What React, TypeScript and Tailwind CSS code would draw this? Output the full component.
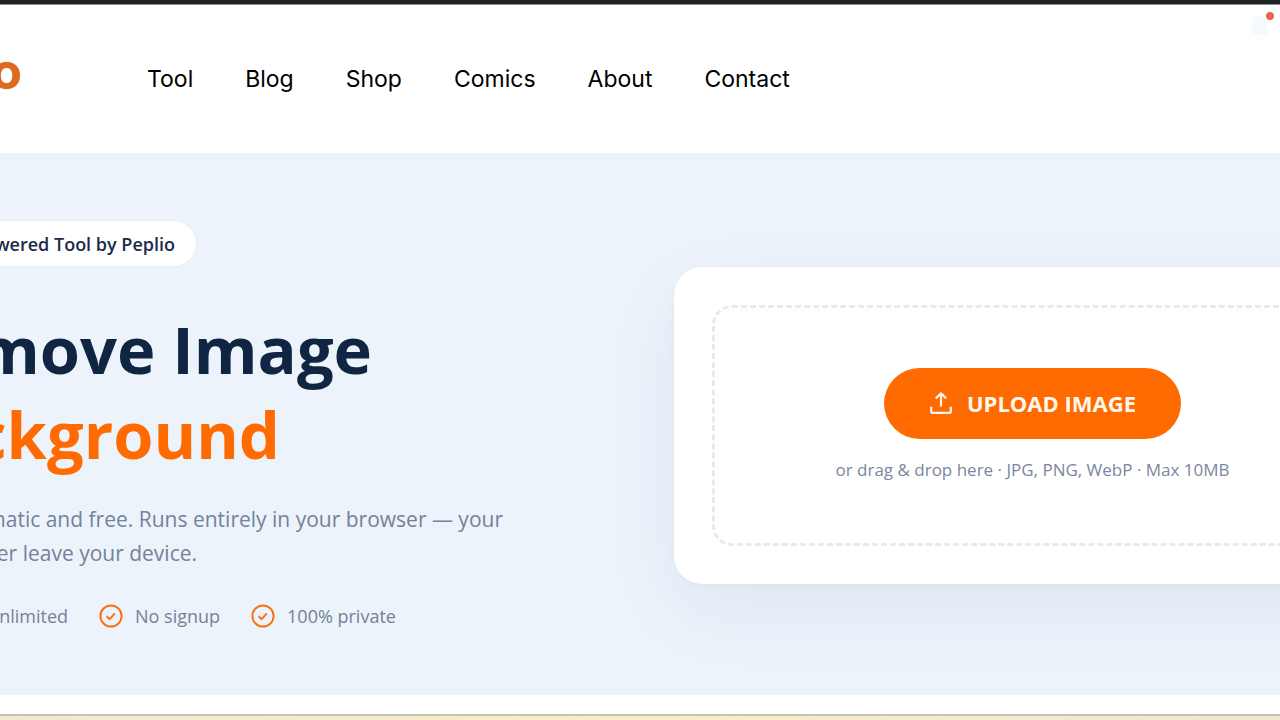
import React from "react";

const navItems = ["Tool", "Blog", "Shop", "Comics", "About", "Contact"];

function CheckIcon() {
  return (
    <svg viewBox="0 0 24 24" fill="none" stroke="#f9731c" className="size-6 shrink-0" aria-hidden="true">
      <circle cx="12" cy="12" r="10.6" strokeWidth="2" />
      <path d="M7.6 12.3l3 2.8 5.2-5.6" strokeWidth="2" />
    </svg>
  );
}

function UploadIcon() {
  return (
    <svg viewBox="0 0 24 24" fill="none" stroke="#fff5e8" strokeWidth="2.2" className="size-6 shrink-0" strokeLinejoin="round" aria-hidden="true">
      <path d="M12 15.500V2.800M6.800 7.400L12 2.400l5.200 5" />
      <path d="M2.200 15.800v4.700a1.400 1.400 0 0 0 1.400 1.400h16.800a1.400 1.400 0 0 0 1.400-1.400v-4.700" />
    </svg>
  );
}

function Bell() {
  return (
    <button type="button" aria-label="Notifications" className="relative mt-[10px] mr-[10px] self-start">
      <svg viewBox="0 0 22 28" fill="#f6fafd" className="h-7 w-[22px]" aria-hidden="true">
        <path d="M11 0.500C6 0.500 3.600 4 3.600 8.500v7c0 1.600-1 2.700-3.400 4.500h21.600c-2.400-1.800-3.400-2.900-3.400-4.500v-7C18.400 4 16 0.500 11 0.500z" />
        <path d="M8.500 23.500h5a2.500 2 0 0 1-5 0z" />
      </svg>
      <span className="absolute -top-[3px] -right-1 size-2 rounded-full bg-[#e2694c]" />
    </button>
  );
}

export default function App() {
  return (
    <div className="flex min-h-screen flex-col overflow-hidden bg-white font-['Open_Sans','Noto_Sans',sans-serif]">
      <div className="h-1 bg-[#1d2327]" />
      <header className="flex h-[149px] border-t border-[#8e9194] font-[Inter,sans-serif]">
        <a href="#home" className="flex w-[22px] shrink-0 justify-end pt-9 text-[50px] leading-[60px] font-bold text-[#e06a1c] [text-shadow:0_0_1px_rgba(0,0,0,0.3)]">
          o
        </a>
        <nav className="ml-[125px] flex flex-1 gap-[52px] pt-[58px]">
          {navItems.map((item) => (
            <a key={item} href={"#" + item.toLowerCase()} className="text-[23px] leading-8 text-black">
              {item}
            </a>
          ))}
        </nav>
        <Bell />
      </header>

      <main className="flex flex-1 flex-col">
        <section className="flex items-center bg-[#ecf3fb] pt-[67px] pb-[65px]">
          <div className="w-[674px] shrink-0">
            <div className="flex h-[47px] w-[197px] items-center justify-end rounded-r-full border border-l-0 border-[#e7edf5] bg-white pr-[21px] text-lg font-semibold whitespace-nowrap text-[#1a2b48]">
              wered Tool by Peplio
            </div>
            <h1 className="mt-10 text-[65px] leading-[85px] font-bold whitespace-nowrap text-[#0f2541]">
              <span className="flex w-[372px] justify-end">move Image</span>
              <span className="flex w-[280px] justify-end text-[#ff6b00]">ckground</span>
            </h1>
            <p className="mt-[25px] text-[21px] leading-[34px] whitespace-nowrap text-[#74829a]">
              <span className="flex w-[503px] justify-end">matic and free. Runs entirely in your browser — your</span>
              <span className="flex w-[197px] justify-end">er leave your device.</span>
            </p>
            <ul className="mt-8 flex gap-[31px] text-lg leading-7 whitespace-nowrap text-[#74829a]">
              <li className="flex w-[68px] justify-end">nlimited</li>
              <li className="flex items-center gap-3">
                <CheckIcon />
                No signup
              </li>
              <li className="flex items-center gap-3">
                <CheckIcon />
                100% private
              </li>
            </ul>
          </div>

          <div className="w-[717px] shrink-0 rounded-[28px] bg-white p-[38px] shadow-[0_26px_80px_rgba(15,37,65,0.06),0_2px_6px_rgba(15,37,65,0.03)]">
            <div className="flex flex-col items-center rounded-[20px] border-3 border-dashed border-[#e7ebf1] pt-[60px] pb-[59px]">
              <button type="button" className="flex h-[71px] items-center gap-[14px] rounded-full bg-[#ff6b00] px-[45px] text-[22px] font-bold text-[#fff8ef]">
                <UploadIcon />
                UPLOAD IMAGE
              </button>
              <p className="mt-[17px] text-[17px] leading-7 whitespace-nowrap text-[#7b879f]">
                or drag &amp; drop here · JPG, PNG, WebP · Max 10MB
              </p>
            </div>
          </div>
        </section>

        <section className="mt-[19px] flex-1 border-t-2 border-[#c6c3b2] bg-linear-to-r from-[#f0ead0] via-[#f9edca] to-[#efe8d2]" />
      </main>
    </div>
  );
}
